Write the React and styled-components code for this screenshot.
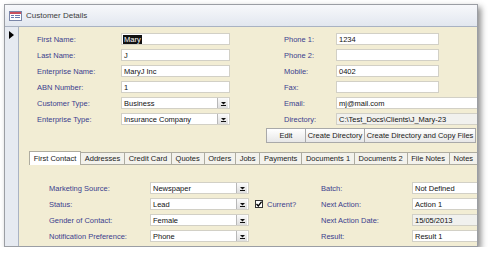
import styled, { createGlobalStyle } from "styled-components";

const GlobalStyle = createGlobalStyle`
	html, body {
		margin: 0;
		padding: 0;
		background: #ffffff;
	}
	body {
		font-family: "Liberation Sans", Arial, sans-serif;
		font-size: 7.5px;
	}
`;

const Window = styled.div`
	box-sizing: border-box;
	margin: 4px 0 0 4px;
	width: 474px;
	height: 243px;
	border: 1px solid #9b9ea4;
	box-shadow: 3px 3px 6px rgba(0, 0, 0, 0.45);
	display: flex;
	flex-direction: column;
	overflow: hidden;
	background: #f2edd4;
`;

const TitleBar = styled.div`
	height: 21px;
	flex: none;
	display: flex;
	align-items: center;
	gap: 4px;
	padding-left: 4px;
	background: linear-gradient(#f7f8fb, #e2e7ef);
	border-bottom: 1px solid #a9b2c2;
	.title {
		font-size: 8px;
		color: #3c3c3c;
	}
`;

const Body = styled.div`
	flex: 1;
	display: flex;
	min-height: 0;
`;

const RecordSelector = styled.div`
	width: 14px;
	flex: none;
	background: #e6eaf1;
	border-right: 1px solid #aab3c3;
	display: flex;
	justify-content: center;
	padding-top: 4px;
	box-sizing: border-box;
`;

const Form = styled.div`
	flex: 1;
	min-width: 0;
	display: flex;
	flex-direction: column;
	overflow: hidden;
`;

const Header = styled.div`
	display: flex;
	gap: 54px;
	padding: 4px 0 0 18px;
`;

const FieldColumn = styled.div`
	display: flex;
	flex-direction: column;
	width: ${(p) => p.$width}px;
	flex: ${(p) => (p.$grow ? 1 : "none")};
	min-width: 0;
`;

const Row = styled.div`
	height: 16px;
	display: flex;
	align-items: center;
`;

const Label = styled.div`
	width: ${(p) => p.$width}px;
	flex: none;
	color: #3b3d8e;
	white-space: nowrap;
`;

const TextBox = styled.div`
	box-sizing: border-box;
	height: 12px;
	width: ${(p) => (p.$width ? `${p.$width}px` : "auto")};
	flex: ${(p) => (p.$width ? "none" : 1)};
	background: ${(p) => (p.$locked ? "#f1f1ee" : "#ffffff")};
	border: 1px solid #d2d0c6;
	display: flex;
	align-items: center;
	padding-left: 2px;
	color: #111111;
	white-space: nowrap;
	overflow: hidden;
	position: relative;
`;

const Selected = styled.span`
	background: #111111;
	color: #ffffff;
	padding: 0 1px;
	margin-left: -1px;
`;

const DropButton = styled.div`
	position: absolute;
	right: 1px;
	top: 0;
	bottom: 0;
	width: 11px;
	box-sizing: border-box;
	border-left: 1px solid #b8b8b8;
	background: linear-gradient(#fbfbfb, #dedede);
	display: flex;
	align-items: center;
	justify-content: center;
`;

const ButtonBar = styled.div`
	display: flex;
	justify-content: flex-end;
	padding-right: 1px;
	margin-top: 1px;
`;

const Button = styled.div`
	height: 15px;
	box-sizing: border-box;
	width: ${(p) => p.$width}px;
	border: 1px solid #a9a9a9;
	margin-left: -1px;
	background: linear-gradient(#ffffff, #e7e7e7);
	display: flex;
	align-items: center;
	justify-content: center;
	color: #1a1a1a;
	white-space: nowrap;
`;

const Tabs = styled.div`
	margin: 8px 0 0 10px;
	display: flex;
	flex-direction: column;
`;

const TabStrip = styled.div`
	display: flex;
	align-items: flex-end;
	height: 14px;
`;

const Tab = styled.div`
	box-sizing: border-box;
	height: ${(p) => (p.$active ? 14 : 13)}px;
	padding: 0 3.75px;
	margin-right: -1px;
	border: 1px solid #aeaca0;
	border-bottom: ${(p) => (p.$active ? "none" : "1px solid #aeaca0")};
	background: ${(p) => (p.$active ? "#ffffff" : "#f3f2ec")};
	display: flex;
	align-items: center;
	white-space: nowrap;
	color: #1a1a1a;
`;

const TabPage = styled.div`
	display: flex;
	padding: 15px 0 0 20px;
`;

const CheckArea = styled.div`
	display: flex;
	flex-direction: column;
	width: 66px;
	flex: none;
	padding-left: 6px;
`;

const CheckRow = styled.div`
	height: 16px;
	display: flex;
	align-items: center;
	gap: 4px;
	color: #3b3d8e;
`;

const CheckBox = styled.div`
	width: 8px;
	height: 8px;
	box-sizing: border-box;
	border: 1px solid #333333;
	background: #ffffff;
	display: flex;
	align-items: center;
	justify-content: center;
`;

const FormIcon = () => (
	<svg width="13" height="10" viewBox="0 0 13 10">
		<rect x="0.5" y="0.5" width="12" height="9" fill="#ffffff" stroke="#7a86a8" />
		<rect x="1" y="1" width="11" height="2" fill="#c9505e" />
		<rect x="2" y="4" width="3" height="1" fill="#6a7cb0" />
		<rect x="6" y="4" width="5" height="1" fill="#6a7cb0" />
		<rect x="2" y="6" width="3" height="1" fill="#6a7cb0" />
		<rect x="6" y="6" width="5" height="1" fill="#6a7cb0" />
	</svg>
);

const Pointer = () => (
	<svg width="5" height="8" viewBox="0 0 5 8">
		<path d="M0 0 L5 4 L0 8 Z" fill="#000000" />
	</svg>
);

const DownArrow = () => (
	<svg width="5" height="5" viewBox="0 0 5 5">
		<path d="M0 1 H5 L2.5 3.5 Z" fill="#111111" />
		<rect x="0" y="4" width="5" height="1" fill="#111111" />
	</svg>
);

const Check = () => (
	<svg width="6" height="6" viewBox="0 0 6 6">
		<path d="M0.5 3 L2.3 5 L5.6 0.6" fill="none" stroke="#000000" strokeWidth="1.3" />
	</svg>
);

const Field = ({ label, labelWidth, value, width, combo, locked, children }) => (
	<Row>
		<Label $width={labelWidth}>{label}</Label>
		<TextBox $width={width} $locked={locked}>
			{children || value}
			{combo && (
				<DropButton>
					<DownArrow />
				</DropButton>
			)}
		</TextBox>
	</Row>
);

const tabs = [
	"First Contact",
	"Addresses",
	"Credit Card",
	"Quotes",
	"Orders",
	"Jobs",
	"Payments",
	"Documents 1",
	"Documents 2",
	"File Notes",
	"Notes",
];

export default function App() {
	return (
		<>
			<GlobalStyle />
			<Window>
				<TitleBar>
					<FormIcon />
					<span className="title">Customer Details</span>
				</TitleBar>
				<Body>
					<RecordSelector>
						<Pointer />
					</RecordSelector>
					<Form>
						<Header>
							<FieldColumn $width={193}>
								<Field label="First Name:" labelWidth={84} width={109}>
									<Selected>Mary</Selected>
								</Field>
								<Field label="Last Name:" labelWidth={84} width={109} value="J" />
								<Field label="Enterprise Name:" labelWidth={84} width={109} value="MaryJ Inc" />
								<Field label="ABN Number:" labelWidth={84} width={109} value="1" />
								<Field label="Customer Type:" labelWidth={84} width={109} value="Business" combo />
								<Field label="Enterprise Type:" labelWidth={84} width={109} value="Insurance Company" combo />
							</FieldColumn>
							<FieldColumn $grow>
								<Field label="Phone 1:" labelWidth={52} width={103} value="1234" />
								<Field label="Phone 2:" labelWidth={52} width={103} value="" />
								<Field label="Mobile:" labelWidth={52} width={103} value="0402" />
								<Field label="Fax:" labelWidth={52} width={103} value="" />
								<Field label="Email:" labelWidth={52} width={150} value="mj@mail.com" />
								<Field label="Directory:" labelWidth={52} width={150} value="C:\Test_Docs\Clients\J_Mary-23" locked />
							</FieldColumn>
						</Header>
						<ButtonBar>
							<Button $width={40}>Edit</Button>
							<Button $width={60}>Create Directory</Button>
							<Button $width={112}>Create Directory and Copy Files</Button>
						</ButtonBar>
						<Tabs>
							<TabStrip>
								{tabs.map((t, i) => (
									<Tab key={t} $active={i === 0}>
										{t}
									</Tab>
								))}
							</TabStrip>
							<TabPage>
								<FieldColumn $width={200}>
									<Field label="Marketing Source:" labelWidth={101} width={99} value="Newspaper" combo />
									<Field label="Status:" labelWidth={101} width={99} value="Lead" combo />
									<Field label="Gender of Contact:" labelWidth={101} width={99} value="Female" combo />
									<Field label="Notification Preference:" labelWidth={101} width={99} value="Phone" combo />
								</FieldColumn>
								<CheckArea>
									<CheckRow />
									<CheckRow>
										<CheckBox>
											<Check />
										</CheckBox>
										Current?
									</CheckRow>
								</CheckArea>
								<FieldColumn $grow>
									<Field label="Batch:" labelWidth={91} width={120} value="Not Defined" />
									<Field label="Next Action:" labelWidth={91} width={120} value="Action 1" />
									<Field label="Next Action Date:" labelWidth={91} width={120} value="15/05/2013" locked />
									<Field label="Result:" labelWidth={91} width={120} value="Result 1" />
								</FieldColumn>
							</TabPage>
						</Tabs>
					</Form>
				</Body>
			</Window>
		</>
	);
}
